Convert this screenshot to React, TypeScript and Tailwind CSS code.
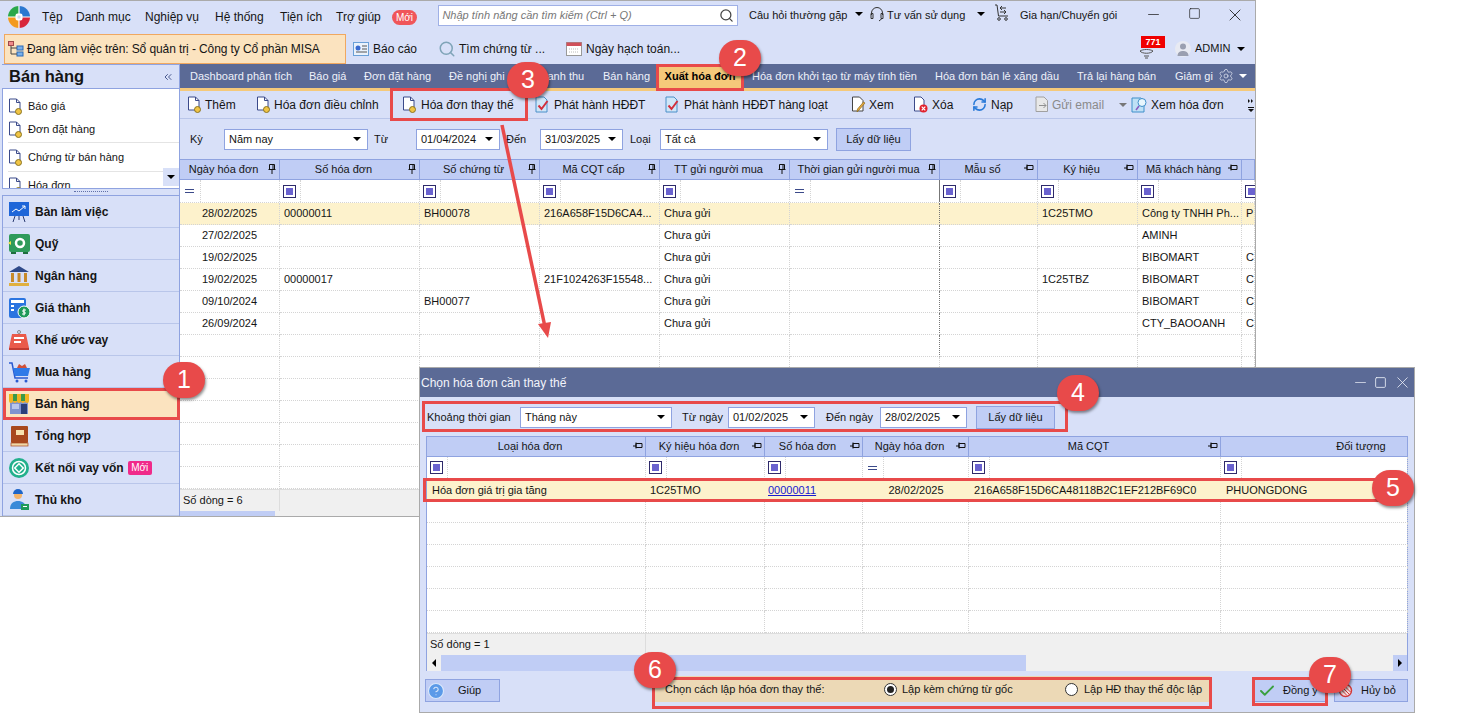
import { ChevronsLeft, RefreshCw, Search, X, Minus, Square, Settings, Check, CircleHelp } from "lucide-react";

const mainCols = "grid-cols-[100px_140px_120px_120px_130px_150px_98px_100px_104px_13px]";
const dlgCols = "grid-cols-[219px_119px_98px_106px_252px_187px]";

function Caret({ className = "", tone = "border-t-black" }: { className?: string; tone?: string }) {
  return <span className={`inline-block w-0 h-0 border-x-[4px] border-x-transparent border-t-[4px] ${tone} ${className}`} />;
}

function Pin({ flat = false }: { flat?: boolean }) {
  return flat ? (
    <svg width="10" height="8" viewBox="0 0 10 8" className="shrink-0">
      <path d="M0 4h3M3 1.500h6v4H3zM3 0.500v6" fill="none" stroke="#111" strokeWidth="1" />
    </svg>
  ) : (
    <svg width="8" height="10" viewBox="0 0 8 10" className="shrink-0">
      <path d="M1.500 0.500h5v5h-5zM0.500 5.500h7M4 6v4M5 1v4" fill="none" stroke="#111" strokeWidth="1" />
    </svg>
  );
}

function FilterBox() {
  return (
    <span className="flex h-full w-[18px] items-center border-r border-dotted border-[#d4d4d4]">
      <span className="flex w-[13px] h-[13px] items-center justify-center border border-[#2e2a6b] bg-white">
        <span className="w-[7px] h-[7px] bg-[#6a62cf]" />
      </span>
    </span>
  );
}

function EqualBox() {
  return (
    <span className="flex h-full w-[18px] items-center border-r border-dotted border-[#d4d4d4]">
      <span className="w-[9px] h-[4px] ml-[2px] border-y border-[#3b4a8a]" />
    </span>
  );
}

function DocIcon() {
  return (
    <svg width="16" height="17" viewBox="0 0 16 17" className="shrink-0">
      <path d="M1.500 1h7l3.500 3.500V14h-10.500z" fill="#fff" stroke="#3b4a8a" />
      <path d="M8.500 1v3.500H12" fill="none" stroke="#3b4a8a" />
      <circle cx="10.500" cy="13.500" r="3" fill="#f0c445" stroke="#8a7420" />
    </svg>
  );
}

function SignDoc() {
  return (
    <svg width="16" height="17" viewBox="0 0 16 17" className="shrink-0">
      <path d="M2 1h8l3 3v12H2z" fill="#cfe6f8" stroke="#4a8fc8" />
      <path d="M4.500 9.500l3 3.500 6-8" fill="none" stroke="#d22f3c" strokeWidth="2" />
    </svg>
  );
}

function PencilDoc() {
  return (
    <svg width="16" height="17" viewBox="0 0 16 17" className="shrink-0">
      <path d="M1.500 1h7l3.500 3.500V15h-10.500z" fill="#fff" stroke="#444" />
      <path d="M14 7l-6 7-2 2 .5-3 6-7z" fill="#e9a93c" stroke="#8a6a20" strokeWidth=".7" />
    </svg>
  );
}

function DeleteDoc() {
  return (
    <svg width="16" height="17" viewBox="0 0 16 17" className="shrink-0">
      <path d="M1.500 1h6.500l3 3v11h-9.500z" fill="#fff" stroke="#3b4a8a" />
      <circle cx="10.500" cy="12.500" r="4" fill="#e2202c" />
      <path d="M8.700 10.700l3.600 3.600M12.300 10.700l-3.600 3.600" stroke="#fff" strokeWidth="1.200" />
    </svg>
  );
}

function MailDoc() {
  return (
    <svg width="16" height="17" viewBox="0 0 16 17" className="shrink-0">
      <path d="M2 1h8l3.500 3.500V15.500H2z" fill="#e8e8e8" stroke="#a0a0a0" />
      <path d="M5 9.500h7M9.500 7l2.500 2.500L9.500 12" fill="none" stroke="#909090" />
    </svg>
  );
}

function ViewDoc() {
  return (
    <svg width="17" height="17" viewBox="0 0 17 17" className="shrink-0">
      <path d="M1 2h9l3 3v11H1z" fill="#bfe0f5" stroke="#3f8fca" />
      <circle cx="11" cy="6.500" r="4" fill="#e8f6fd" stroke="#3f8fca" />
      <path d="M8 10l-3 4" stroke="#8a5ac0" strokeWidth="1.500" />
    </svg>
  );
}

function Logo() {
  return (
    <svg width="24" height="24" viewBox="0 0 24 24" className="shrink-0">
      <path d="M12 12V1A11 11 0 0 0 1 12z" fill="#2aa84a" />
      <path d="M12 12V1A11 11 0 0 1 23 12z" fill="#2b78d0" />
      <path d="M12 12H1A11 11 0 0 0 12 23z" fill="#f39a1e" />
      <path d="M12 12H23A11 11 0 0 1 12 23z" fill="#d8263a" />
      <path d="M12 1v22M1 12h22" stroke="#fff" strokeWidth="1.200" />
      <rect x="8.500" y="8.500" width="7" height="7" rx="2" fill="#fff" />
      <rect x="10.500" y="10.500" width="3" height="3" rx=".5" fill="#cfd8f0" />
    </svg>
  );
}

function NavIcon({ name }: { name: string }) {
  if (name === "desk")
    return (
      <svg width="22" height="22" viewBox="0 0 22 22">
        <rect x="1" y="1" width="20" height="14" fill="#1f66d8" />
        <path d="M4 11l4-3 3 2 6-5M14 5h3v3" fill="none" stroke="#fff" />
        <path d="M7 15l-2 6M15 15l2 6M11 15v4" stroke="#2a3a70" />
      </svg>
    );
  if (name === "safe")
    return (
      <svg width="23" height="22" viewBox="0 0 23 22">
        <rect x="1" y="1" width="21" height="18" rx="2" fill="#2f9a5a" />
        <rect x="3" y="19" width="5" height="2" fill="#1e6e3e" />
        <rect x="15" y="19" width="5" height="2" fill="#1e6e3e" />
        <circle cx="12" cy="10" r="4" fill="none" stroke="#fff" strokeWidth="2.500" />
        <path d="M0 10l3-2v4z" fill="#f4e04a" />
      </svg>
    );
  if (name === "bank")
    return (
      <svg width="22" height="22" viewBox="0 0 22 22">
        <path d="M11 1l10 6H1z" fill="#2f4a8a" />
        <rect x="3" y="8" width="3" height="9" fill="#c88a2a" />
        <rect x="9.500" y="8" width="3" height="9" fill="#c88a2a" />
        <rect x="16" y="8" width="3" height="9" fill="#c88a2a" />
        <rect x="1" y="18" width="20" height="3" fill="#e0b040" />
      </svg>
    );
  if (name === "cost")
    return (
      <svg width="23" height="22" viewBox="0 0 23 22">
        <rect x="1" y="1" width="17" height="20" rx="2" fill="#2a74e0" />
        <rect x="3" y="3" width="13" height="3" fill="#fff" />
        <rect x="3" y="8" width="3" height="2" fill="#fff" />
        <rect x="3" y="12" width="3" height="2" fill="#fff" />
        <circle cx="16" cy="15" r="6" fill="#1f9a5a" stroke="#fff" />
        <path d="M18 13h-3v2h2v2h-3M16 11.500v7" fill="none" stroke="#fff" />
      </svg>
    );
  if (name === "loan")
    return (
      <svg width="22" height="22" viewBox="0 0 22 22">
        <circle cx="11" cy="3" r="1.500" fill="none" stroke="#888" />
        <path d="M4 5h14l3 14H1z" fill="#ea5a4a" />
        <rect x="6" y="8" width="10" height="2" fill="#fff" />
        <rect x="6" y="12" width="7" height="2" fill="#fff" />
        <rect x="1" y="19" width="20" height="2" fill="#c23a30" />
      </svg>
    );
  if (name === "buy")
    return (
      <svg width="23" height="22" viewBox="0 0 23 22">
        <path d="M1 2h3l3 15h13" fill="none" stroke="#2a5ad0" strokeWidth="1.500" />
        <path d="M5 7h17l-2 8H7z" fill="#2f7ae8" />
        <path d="M9 7l2-4 3 2 3-2 2 4z" fill="#d0503a" />
        <circle cx="9" cy="20" r="1.500" fill="#2a5ad0" />
        <circle cx="18" cy="20" r="1.500" fill="#2a5ad0" />
      </svg>
    );
  if (name === "sell")
    return (
      <svg width="22" height="22" viewBox="0 0 22 22">
        <rect x="2" y="8" width="18" height="13" fill="#7f93cf" />
        <rect x="13" y="11" width="6" height="10" fill="#2b3f7a" />
        <rect x="4" y="11" width="7" height="5" fill="#b9c6ea" />
        <path d="M1 1h20v7a2 2 0 0 1-4 0 2 2 0 0 1-4 0 2 2 0 0 1-4 0 2 2 0 0 1-4 0 2 2 0 0 1-4 0z" fill="#f2b320" />
        <path d="M5 1h4v7H5zM13 1h4v7h-4z" fill="#3a9a4a" />
      </svg>
    );
  if (name === "book")
    return (
      <svg width="22" height="22" viewBox="0 0 22 22">
        <rect x="3" y="1" width="17" height="17" rx="1" fill="#a8481e" />
        <rect x="8" y="5" width="8" height="5" fill="#f7e2b0" />
        <rect x="3" y="18" width="17" height="3" fill="#f0d8a8" stroke="#a8481e" strokeWidth=".7" />
      </svg>
    );
  if (name === "link")
    return (
      <svg width="22" height="22" viewBox="0 0 22 22">
        <circle cx="11" cy="11" r="10" fill="#22b08c" />
        <circle cx="11" cy="11" r="6.500" fill="none" stroke="#fff" strokeWidth="1.500" />
        <rect x="8" y="8" width="6" height="6" transform="rotate(45 11 11)" fill="none" stroke="#fff" strokeWidth="1.500" />
      </svg>
    );
  return (
    <svg width="22" height="22" viewBox="0 0 22 22">
      <circle cx="10" cy="6" r="4" fill="#f2b36a" />
      <path d="M5 5a5 5 0 0 1 10 0z" fill="#1f66c8" />
      <path d="M2 20c0-6 4-8 8-8s8 2 8 8z" fill="#3a8ad8" />
      <rect x="13" y="15" width="8" height="6" fill="#1f9a5a" />
      <rect x="15" y="17" width="4" height="1" fill="#fff" />
    </svg>
  );
}

const navItems = [
  { name: "desk", label: "Bàn làm việc" },
  { name: "safe", label: "Quỹ" },
  { name: "bank", label: "Ngân hàng" },
  { name: "cost", label: "Giá thành" },
  { name: "loan", label: "Khế ước vay" },
  { name: "buy", label: "Mua hàng" },
  { name: "sell", label: "Bán hàng", active: true },
  { name: "book", label: "Tổng hợp" },
  { name: "link", label: "Kết nối vay vốn", isNew: true },
  { name: "user", label: "Thủ kho" },
];

const tabs = [
  { label: "Dashboard phân tích", w: "w-[119px]" },
  { label: "Báo giá", w: "w-[55px]" },
  { label: "Đơn đặt hàng", w: "w-[85px]" },
  { label: "Đề nghị ghi nhận doanh thu", w: "w-[154px]" },
  { label: "Bán hàng", w: "w-[53px]" },
  { label: "Xuất hóa đơn", w: "w-[88px]", active: true },
  { label: "Hóa đơn khởi tạo từ máy tính tiền", w: "w-[183px]" },
  { label: "Hóa đơn bán lẻ xăng dầu", w: "w-[142px]" },
  { label: "Trả lại hàng bán", w: "w-[98px]" },
  { label: "Giảm gi", w: "w-[43px]" },
];

const mainHeaders = [
  { t: "Ngày hóa đơn", pin: "v" },
  { t: "Số hóa đơn", pin: "v" },
  { t: "Số chứng từ", pin: "v" },
  { t: "Mã CQT cấp", pin: "v" },
  { t: "TT gửi người mua", pin: "v" },
  { t: "Thời gian gửi người mua", pin: "v" },
  { t: "Mẫu số", pin: "h" },
  { t: "Ký hiệu", pin: "h" },
  { t: "Mã khách hàng", pin: "h" },
  { t: "", pin: "" },
];

const mainRows = [
  ["28/02/2025", "00000011", "BH00078", "216A658F15D6CA4...", "Chưa gửi", "", "", "1C25TMO", "Công ty TNHH Ph...", "P"],
  ["27/02/2025", "", "", "", "Chưa gửi", "", "", "", "AMINH", ""],
  ["19/02/2025", "", "", "", "Chưa gửi", "", "", "", "BIBOMART", "C"],
  ["19/02/2025", "00000017", "", "21F1024263F15548...", "Chưa gửi", "", "", "1C25TBZ", "BIBOMART", "C"],
  ["09/10/2024", "", "BH00077", "", "Chưa gửi", "", "", "", "BIBOMART", "C"],
  ["26/09/2024", "", "", "", "Chưa gửi", "", "", "", "CTY_BAOOANH", "C"],
  ["", "", "", "", "", "", "", "", "", ""],
];

const emptyRows = [0, 1, 2, 3, 4, 5];

function Combo({ value, className }: { value: string; className: string }) {
  return (
    <div className={`flex h-[21px] items-center justify-between bg-white border border-[#8fa3e0] pl-1 pr-[6px] ${className}`}>
      <span>{value}</span>
      <Caret />
    </div>
  );
}

function MainGrid() {
  return (
    <div className="flex-1 min-h-0 flex flex-col overflow-hidden bg-white text-[11px]">
      <div className={`grid ${mainCols} h-[21px] shrink-0 bg-[#c0cdf5] border-y border-[#8fa3e0]`}>
        {mainHeaders.map((h, i) => (
          <div key={i} className="relative flex items-center justify-center pr-[12px] whitespace-nowrap border-r border-[#8fa3e0]">
            <span>{h.t}</span>
            {h.pin && (
              <span className="absolute right-[3px] top-[4px]">
                <Pin flat={h.pin === "h"} />
              </span>
            )}
          </div>
        ))}
      </div>
      <div className={`grid ${mainCols} h-[23px] shrink-0 border-b border-dotted border-[#d4d4d4]`}>
        {mainHeaders.map((h, i) => (
          <div key={i} className={`flex items-center pl-[3px] ${i === 5 ? "border-r border-[#777]" : "border-r border-dotted border-[#d4d4d4]"}`}>
            {i === 0 || i === 5 ? <EqualBox /> : <FilterBox />}
          </div>
        ))}
      </div>
      {mainRows.map((row, r) => (
        <div key={r} className={`grid ${mainCols} h-[22px] shrink-0 ${r === 0 ? "bg-[#fdf2cc]" : ""}`}>
          {row.map((c, i) => (
            <div
              key={i}
              className={`flex items-center overflow-hidden whitespace-nowrap border-b border-dotted border-[#d4d4d4] ${i === 0 ? "justify-center" : "pl-1"} ${
                i === 5 ? "border-r border-r-[#777]" : "border-r border-[#d4d4d4]"
              }`}
            >
              {c}
            </div>
          ))}
        </div>
      ))}
      {emptyRows.map((r) => (
        <div key={r} className={`grid ${mainCols} h-[22px] shrink-0`}>
          {mainHeaders.map((_, i) => (
            <div key={i} className="border-r border-b border-dotted border-[#d4d4d4]" />
          ))}
        </div>
      ))}
      <div className="flex-1" />
      <div className="flex h-[22px] shrink-0 items-center bg-[#f0f0f0] border-t border-[#ddd]">
        <span className="w-[100px] pl-[3px] border-r border-[#ddd] h-full flex items-center">Số dòng = 6</span>
      </div>
      <div className="flex h-[7px] shrink-0 bg-[#f0f0f0]">
        <div className="w-[95px] bg-[#c0cdf5]" />
      </div>
    </div>
  );
}

function Dialog() {
  const headers = ["Loại hóa đơn", "Ký hiệu hóa đơn", "Số hóa đơn", "Ngày hóa đơn", "Mã CQT", "Đối tượng"];
  const blank = [0, 1, 2, 3, 4, 5];
  return (
    <div className="absolute left-[419px] top-[367px] w-[996px] h-[346px] flex flex-col bg-[#d8e0f8] border border-[#aaa] text-[11px]">
      <div className="flex h-[29px] shrink-0 items-center justify-between bg-[#5b6a96] text-[12px] text-[#f2f4fb] pl-[1px]">
        <span>Chọn hóa đơn cần thay thế</span>
        <div className="flex items-center text-[#eef1fa]">
          <span className="flex w-[20px] justify-center"><Minus size={17} strokeWidth={1} /></span>
          <span className="flex w-[20px] justify-center"><Square size={13} strokeWidth={1.500} /></span>
          <span className="flex w-[24px] justify-center"><X size={19} strokeWidth={1} /></span>
        </div>
      </div>
      <div className="flex h-[39px] shrink-0 items-center pl-[7px] pt-[1px] whitespace-nowrap">
        <span className="w-[93px]">Khoảng thời gian</span>
        <Combo value="Tháng này" className="w-[152px]" />
        <span className="ml-[10px] w-[46px]">Từ ngày</span>
        <Combo value="01/02/2025" className="w-[87px]" />
        <span className="ml-[11px] w-[54px]">Đến ngày</span>
        <Combo value="28/02/2025" className="w-[87px]" />
        <div className="ml-[9px] flex h-[23px] w-[79px] items-center justify-center bg-[#c0cdf5] border border-[#8fa3e0]">Lấy dữ liệu</div>
      </div>
      <div className="mx-[6px] w-[982px] h-[235px] shrink-0 flex flex-col bg-white border-x border-[#8fa3e0]">
        <div className={`grid ${dlgCols} h-[21px] shrink-0 bg-[#c0cdf5] border-y border-[#8fa3e0]`}>
          {headers.map((h, i) => (
            <div key={i} className={`relative flex items-center justify-center border-r border-[#8fa3e0] ${i === 5 ? "pl-[94px]" : "pr-[12px]"}`}>
              <span>{h}</span>
              {i < 5 && (
                <span className="absolute right-[2px] top-[5px]">
                  <Pin flat />
                </span>
              )}
            </div>
          ))}
        </div>
        <div className={`grid ${dlgCols} h-[22px] shrink-0`}>
          {blank.map((i) => (
            <div key={i} className="flex items-center pl-[3px] border-r border-b border-dotted border-[#d4d4d4]">
              {i === 3 ? <EqualBox /> : <FilterBox />}
            </div>
          ))}
        </div>
        <div className={`grid ${dlgCols} h-[22px] shrink-0 bg-[#fdf2cc]`}>
          <div className="flex items-center pl-[5px]">Hóa đơn giá trị gia tăng</div>
          <div className="flex items-center pl-[4px]">1C25TMO</div>
          <div className="flex items-center pl-[3px] text-[#1a1ad0] underline">00000011</div>
          <div className="flex items-center justify-center">28/02/2025</div>
          <div className="flex items-center pl-[5px] whitespace-nowrap">216A658F15D6CA48118B2C1EF212BF69C0</div>
          <div className="flex items-center pl-[5px]">PHUONGDONG</div>
        </div>
        {[0, 1, 2, 3, 4, 5].map((r) => (
          <div key={r} className={`grid ${dlgCols} h-[22px] shrink-0`}>
            {blank.map((i) => (
              <div key={i} className="border-r border-b border-dotted border-[#d4d4d4]" />
            ))}
          </div>
        ))}
        <div className="flex-1" />
        <div className="flex h-[22px] shrink-0 items-center bg-[#f0f0f0] border-t border-[#ddd]">
          <span className="w-[219px] h-full flex items-center pl-[3px] border-r border-[#ddd]">Số dòng = 1</span>
        </div>
        <div className="flex h-[16px] shrink-0 items-center bg-[#f0f0f0]">
          <span className="flex w-[14px] justify-center">
            <span className="w-0 h-0 border-y-[4px] border-y-transparent border-r-[4px] border-r-black" />
          </span>
          <div className="h-full w-[585px] bg-[#c0cdf5]" />
          <div className="flex-1" />
          <span className="flex w-[14px] h-full items-center justify-center bg-[#c0cdf5]">
            <span className="w-0 h-0 border-y-[4px] border-y-transparent border-l-[4px] border-l-black" />
          </span>
        </div>
      </div>
      <div className="flex flex-1 items-start pt-[8px] pl-[5px] whitespace-nowrap">
        <div className="flex h-[23px] w-[75px] items-center gap-[13px] pl-[1px] bg-[#c0cdf5] border border-[#8fa3e0]">
          <CircleHelp size={18} fill="#5b9ae8" color="#dbe8fb" strokeWidth={1.500} />
          <span>Giúp</span>
        </div>
        <div className="ml-[155px] -mt-[3px] flex h-[26px] w-[555px] items-center bg-[#ecd9b6] pl-[10px]">
          <span className="w-[219px]">Chọn cách lập hóa đơn thay thế:</span>
          <span className="w-[181px] flex items-center gap-[5px]">
            <span className="flex w-[13px] h-[13px] items-center justify-center rounded-full border border-[#333] bg-white">
              <span className="w-[7px] h-[7px] rounded-full bg-[#222]" />
            </span>
            Lập kèm chứng từ gốc
          </span>
          <span className="flex items-center gap-[6px]">
            <span className="w-[13px] h-[13px] rounded-full border border-[#333] bg-white" />
            Lập HĐ thay thế độc lập
          </span>
        </div>
        <div className="ml-[44px] flex h-[23px] w-[72px] items-center gap-[7px] pl-[3px] bg-[#c0cdf5] border border-[#8fa3e0]">
          <Check size={18} color="#3aa040" strokeWidth={2.500} />
          <span>Đồng ý</span>
        </div>
        <div className="ml-[8px] flex h-[23px] w-[74px] items-center gap-[8px] pl-[3px] bg-[#c0cdf5] border border-[#8fa3e0]">
          <svg width="15" height="15" viewBox="0 0 15 15">
            <circle cx="7.500" cy="7.500" r="6" fill="#f8dede" stroke="#d23a3a" strokeWidth="1.500" />
            <path d="M3.500 3.500l8 8M6 2.500l6.500 6.500M2.500 6L9 12.500" stroke="#d23a3a" />
          </svg>
          <span>Hủy bỏ</span>
        </div>
      </div>
    </div>
  );
}

function Badge({ n, className }: { n: number; className: string }) {
  return (
    <div className={`absolute flex w-[42px] h-[36px] items-center justify-center rounded-full bg-[#e84a4a] text-white text-[25px] shadow-[1px_2px_3px_rgba(0,0,0,0.45)] ${className}`}>
      {n}
    </div>
  );
}

function RedBox({ className }: { className: string }) {
  return <div className={`absolute border-[3px] border-[#e84a4a] ${className}`} />;
}

export default function App() {
  return (
    <div className="relative w-[1478px] h-[714px] overflow-hidden bg-white text-[12px] text-[#151515] font-['Liberation_Sans',sans-serif]">
      {/* Main window */}
      <div className="w-[1256px] h-[517px] flex flex-col bg-[#d8e0f8] border-t border-r border-b border-[#aaa]">
        <div className="flex h-[32px] shrink-0">
          <div className="flex items-center pl-[7px] w-[439px]">
            <Logo />
            <nav className="flex items-center ml-[11px]">
              <span className="w-[34px]">Tệp</span>
              <span className="w-[69px]">Danh mục</span>
              <span className="w-[70px]">Nghiệp vụ</span>
              <span className="w-[65px]">Hệ thống</span>
              <span className="w-[56px]">Tiện ích</span>
              <span className="w-[56px]">Trợ giúp</span>
              <span className="flex w-[25px] h-[15px] items-center justify-center rounded-full bg-[#f0565a] text-white text-[10px]">Mới</span>
            </nav>
          </div>
          <div className="flex h-[21px] w-[300px] mt-[4px] items-center justify-between bg-white border border-[#9fb0e6] pl-[3px] pr-[3px] text-[11px]">
            <span className="italic text-[#777]">Nhập tính năng cần tìm kiếm (Ctrl + Q)</span>
            <Search size={15} color="#444" />
          </div>
          <div className="flex flex-1 items-start pt-[6px] whitespace-nowrap text-[11px]">
            <span className="ml-[11px] w-[106px]">Câu hỏi thường gặp</span>
            <Caret className="mt-[5px]" />
            <svg width="16" height="16" viewBox="0 0 16 16" className="ml-[6px] -mt-[1px]" fill="none" stroke="#333">
              <path d="M2.500 9V7a5.500 5.500 0 0 1 11 0v2M2 7.500h2v5H2zM12 7.500h2v5h-2zM13 12.500l-3 2.500" />
            </svg>
            <span className="ml-[2px] w-[90px]">Tư vấn sử dụng</span>
            <Caret className="mt-[5px]" />
            <svg width="16" height="17" viewBox="0 0 16 17" className="ml-[9px] -mt-[3px]" fill="none" stroke="#333">
              <path d="M1 1h2l1.500 11H14M6 4h6M8 2L6 4l2 2M12 8H6M10 6l2 2-2 2" />
              <circle cx="5" cy="15" r="1.300" />
              <circle cx="12" cy="15" r="1.300" />
            </svg>
            <span className="ml-[10px] w-[113px]">Gia hạn/Chuyển gói</span>
            <span className="flex w-[41px] justify-center -mt-[1px]"><Minus size={17} strokeWidth={1} /></span>
            <span className="flex w-[41px] justify-center"><Square size={13} strokeWidth={1.200} /></span>
            <span className="flex w-[40px] justify-center -mt-[2px]"><X size={20} strokeWidth={1} /></span>
          </div>
        </div>

        <div className="flex h-[31px] shrink-0 items-center pl-[4px]">
          <div className="flex h-[30px] w-[342px] items-center gap-[3px] pl-[3px] bg-[#fbe3bf] border border-[#f0a860]">
            <svg width="16" height="16" viewBox="0 0 16 16" className="shrink-0">
              <rect x=".5" y=".5" width="5" height="4" fill="#f08a8a" stroke="#a04a4a" />
              <rect x="9" y="5" width="6" height="4" fill="#7ab0ea" stroke="#2a6ab8" />
              <rect x="9" y="11" width="6" height="4" fill="#7ab0ea" stroke="#2a6ab8" />
              <path d="M3 5v8h6M3 7h6" fill="none" stroke="#444" />
            </svg>
            <span className="whitespace-nowrap tracking-[-0.1px]">Đang làm việc trên: Sổ quản trị - Công ty Cổ phần MISA</span>
          </div>
          <svg width="16" height="14" viewBox="0 0 16 14" className="ml-[7px]">
            <rect x=".5" y=".5" width="15" height="13" fill="#eaf2fc" stroke="#6aa0d8" />
            <circle cx="5" cy="6" r="2.500" fill="#3a6ad0" />
            <path d="M9 4h5M9 7h5M3 10h11" stroke="#555" />
          </svg>
          <span className="ml-[4px] w-[65px]">Báo cáo</span>
          <Search size={18} color="#7fa4b8" />
          <span className="ml-[3px] w-[107px] whitespace-nowrap">Tìm chứng từ ...</span>
          <svg width="16" height="14" viewBox="0 0 16 14">
            <rect x=".5" y=".5" width="15" height="13" fill="#fff" stroke="#999" />
            <rect x=".5" y=".5" width="15" height="3.500" fill="#d0505a" />
            <path d="M3 7h10M3 10h10" stroke="#bbb" strokeDasharray="1 1" />
          </svg>
          <span className="ml-[4px] w-[551px] whitespace-nowrap">Ngày hạch toán...</span>
          <div className="relative w-[35px] h-[24px]">
            <svg width="15" height="10" viewBox="0 0 15 10" className="absolute left-[2px] top-[12px]" fill="none" stroke="#555">
              <path d="M1 2c3-2 10-2 13 0-2 3-11 3-13 0zM5 7h5M6 9h3" />
            </svg>
            <span className="absolute left-[4px] -top-[1px] w-[24px] h-[12px] bg-[#f00000] text-white text-[9px] font-bold leading-[12px] text-center">771</span>
          </div>
          <svg width="16" height="16" viewBox="0 0 16 16" className="ml-[3px]">
            <circle cx="8" cy="8" r="8" fill="#e8eaf2" />
            <circle cx="8" cy="5.500" r="3" fill="#9a9fb0" />
            <path d="M2.500 15c0-4 3-5 5.500-5s5.500 1 5.500 5z" fill="#9a9fb0" />
          </svg>
          <span className="ml-[4px] w-[42px] text-[11px]">ADMIN</span>
          <Caret />
        </div>

        <div className="flex flex-1 min-h-0">
          {/* Left panel */}
          <aside className="w-[180px] shrink-0 flex flex-col pl-[2px] border-r border-[#8fa3e0]">
            <div className="flex h-[25px] shrink-0 items-center justify-between pl-[7px] pr-[5px] border-y border-[#8fa3e0]">
              <span className="text-[16.5px] font-bold">Bán hàng</span>
              <ChevronsLeft size={12} color="#4a5a90" />
            </div>
            <div className="relative h-[99px] shrink-0 overflow-hidden bg-white border-l border-[#8fa3e0] pl-[5px] text-[11px]">
              <div className="flex h-[23px] mt-[6px] items-center gap-[4px]"><DocIcon />Báo giá</div>
              <div className="flex h-[23px] items-center gap-[4px]"><DocIcon />Đơn đặt hàng</div>
              <div className="flex h-[30px] mt-[1px] items-center gap-[4px] border-y border-[#e4e4e4]"><DocIcon />Chứng từ bán hàng</div>
              <div className="flex h-[23px] mt-[2px] items-center gap-[4px]"><DocIcon />Hóa đơn</div>
              <span className="absolute right-0 bottom-[2px] flex w-[16px] h-[18px] items-center justify-center bg-[#d8e0f8]"><Caret /></span>
            </div>
            <div className="h-[8px] shrink-0 flex items-center justify-center border-y border-[#8fa3e0] pb-[1px]">
              <span className="w-[34px] border-t border-dotted border-[#6070a8]" />
            </div>
            <div className="flex-1 min-h-0 border-l border-[#8fa3e0]">
              {navItems.map((it) => (
                <div
                  key={it.label}
                  className={`flex h-[32px] items-center gap-[4px] pl-[4px] border-b border-[#b9c6ea] font-bold ${it.active ? "bg-[#fbe3bf]" : ""}`}
                >
                  <span className="flex w-[24px] justify-center">
                    <NavIcon name={it.name} />
                  </span>
                  <span>{it.label}</span>
                  {it.isNew && <span className="flex w-[24px] h-[14px] items-center justify-center rounded-[2px] bg-[#f02a8a] text-white text-[10px] font-normal">Mới</span>}
                </div>
              ))}
            </div>
          </aside>

          {/* Content */}
          <div className="flex-1 min-w-0 flex flex-col">
            <div className="flex h-[24px] shrink-0 items-center bg-[#5b6a96] text-[#eef1fa] text-[11px] pl-[10px] whitespace-nowrap">
              {tabs.map((t) =>
                t.active ? (
                  <div key={t.label} className={`flex h-full items-center justify-center font-bold text-black bg-[#f5c97a] ${t.w} mr-[8px]`}>{t.label}</div>
                ) : (
                  <span key={t.label} className={t.w}>{t.label}</span>
                )
              )}
              <Settings size={16} strokeWidth={1} />
              <Caret className="ml-[5px]" tone="border-t-white" />
            </div>
            <div className="h-[3px] shrink-0 bg-[#f5c97a]" />
            <div className="flex h-[28px] shrink-0 items-center pl-[7px] border-b border-[#b9c6ea] whitespace-nowrap">
              <span className="flex w-[69px] items-center gap-[2px]"><DocIcon />Thêm</span>
              <span className="flex w-[146px] items-center gap-[2px]"><DocIcon />Hóa đơn điều chỉnh</span>
              <span className="flex w-[132px] items-center gap-[3px]"><DocIcon />Hóa đơn thay thế</span>
              <span className="flex w-[130px] items-center gap-[4px]"><SignDoc />Phát hành HĐĐT</span>
              <span className="flex w-[187px] items-center gap-[4px]"><SignDoc />Phát hành HĐĐT hàng loạt</span>
              <span className="flex w-[62px] items-center gap-[2px]"><PencilDoc />Xem</span>
              <span className="flex w-[59px] items-center gap-[3px]"><DeleteDoc />Xóa</span>
              <span className="flex w-[62px] items-center gap-[4px]"><RefreshCw size={15} color="#2a7ad8" strokeWidth={2.500} />Nạp</span>
              <span className="flex w-[85px] items-center gap-[2px] text-[#8a8a8a]"><MailDoc />Gửi email</span>
              <Caret className="mr-[4px]" tone="border-t-[#777]" />
              <span className="flex w-[117px] items-center gap-[3px]"><ViewDoc />Xem hóa đơn</span>
              <svg width="6" height="14" viewBox="0 0 6 14" fill="#111">
                <path d="M0 1l2 2-2 2zM3 1l2 2-2 2zM0 9h6v1H0zM0 11h6l-3 3z" />
              </svg>
            </div>
            <div className="flex h-[40px] shrink-0 items-center pl-[10px] whitespace-nowrap text-[11px]">
              <span className="w-[34px]">Kỳ</span>
              <Combo value="Năm nay" className="w-[144px]" />
              <span className="ml-[6px] w-[42px]">Từ</span>
              <Combo value="01/04/2024" className="w-[84px]" />
              <span className="ml-[6px] w-[34px]">Đến</span>
              <Combo value="31/03/2025" className="w-[83px]" />
              <span className="ml-[7px] w-[30px]">Loại</span>
              <Combo value="Tất cả" className="w-[168px]" />
              <div className="ml-[8px] flex h-[23px] w-[75px] items-center justify-center bg-[#c0cdf5] border border-[#8fa3e0]">Lấy dữ liệu</div>
            </div>
            <MainGrid />
          </div>
        </div>
      </div>

      <Dialog />

      {/* Annotations over the screenshot */}
      <svg width="60" height="225" viewBox="0 0 60 225" className="absolute left-[498px] top-[122px]">
        <path d="M4 3L47 205" stroke="#e84a4a" strokeWidth="3.500" fill="none" />
        <path d="M40 202L53 200L50 216z" fill="#e84a4a" />
      </svg>
      <RedBox className="left-[3px] top-[388px] w-[177px] h-[32px]" />
      <RedBox className="left-[656px] top-[64px] w-[88px] h-[27px]" />
      <RedBox className="left-[390px] top-[88px] w-[138px] h-[33px]" />
      <RedBox className="left-[422px] top-[401px] w-[646px] h-[31px]" />
      <RedBox className="left-[423px] top-[478px] w-[972px] h-[24px]" />
      <RedBox className="left-[652px] top-[677px] w-[560px] h-[32px]" />
      <RedBox className="left-[1252px] top-[677px] w-[76px] h-[29px]" />
      <Badge n={1} className="left-[163px] top-[362px]" />
      <Badge n={2} className="left-[719px] top-[40px]" />
      <Badge n={3} className="left-[507px] top-[62px]" />
      <Badge n={4} className="left-[1057px] top-[375px]" />
      <Badge n={5} className="left-[1372px] top-[470px]" />
      <Badge n={6} className="left-[634px] top-[652px]" />
      <Badge n={7} className="left-[1309px] top-[657px]" />
    </div>
  );
}
